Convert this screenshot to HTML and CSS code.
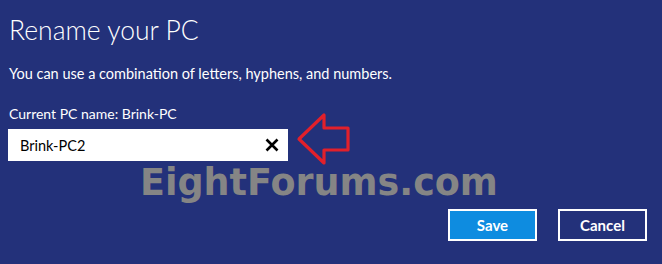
FILE: index.html
```html
<!DOCTYPE html>
<html lang="en">
<head>
    <meta charset="UTF-8">
    <meta name="viewport" content="width=device-width, initial-scale=1.0">
    <title>Rename your PC</title>
    <link rel="stylesheet" href="styles.css">
</head>
<body>
    <div class="panel">
        <h1>Rename your PC</h1>
        <p class="hint">You can use a combination of letters, hyphens, and numbers.</p>

        <label class="current">Current PC name: Brink-PC</label>
        <div class="name-box">
            <span class="value">Brink-PC2</span>
            <svg class="clear" width="14" height="14" viewBox="0 0 14 14">
                <path d="M1.5 1.5 L12.5 12.5 M12.5 1.5 L1.5 12.5" stroke="#000" stroke-width="2.6" fill="none"/>
            </svg>
        </div>

        <div class="actions">
            <button class="btn primary">Save</button>
            <button class="btn">Cancel</button>
        </div>

        <!-- annotation arrow and site watermark -->
        <svg class="arrow" width="60" height="56" viewBox="0 0 60 56">
            <path d="M3 27 L28 3 L28 16 L52 16 L52 38 L28 38 L28 51 Z" fill="none" stroke="#e2202b" stroke-width="3.2" stroke-linejoin="round"/>
        </svg>
        <div class="watermark">EightForums.com</div>
    </div>
</body>
</html>
```

FILE: styles.css
```css
html, body { margin: 0; padding: 0; }
body { background: #23317a; width: 662px; height: 264px; overflow: hidden; font-family: Lato, "Open Sans", sans-serif; color: #fff; }
.panel { position: relative; height: 264px; padding: 13px 15px 0 9px; box-sizing: border-box; }
h1 { margin: 0; font-size: 26.5px; line-height: 34px; font-weight: 300; }
.hint { margin: 17px 0 0; font-size: 14.5px; line-height: 20px; }
.current { display: block; margin-top: 20px; font-size: 14px; line-height: 20px; }
.name-box { margin: 5px 0 0 -1px; width: 280px; height: 32px; background: #fff; color: #000; display: flex; align-items: center; justify-content: space-between; padding: 0 9px 0 12px; box-sizing: border-box; font-size: 14.5px; }
.clear { display: block; }
.actions { display: flex; justify-content: flex-end; gap: 21px; margin-top: 48px; }
.btn { width: 89px; height: 32px; border: 2px solid #fff; background: transparent; color: #fff; font-family: inherit; font-size: 15px; font-weight: 700; padding: 0; }
.btn.primary { background: #0e8ce0; }
.arrow { position: absolute; left: 296px; top: 112px; }
.watermark { position: absolute; left: 140px; top: 161px; font-family: "DejaVu Sans", Verdana, sans-serif; font-weight: bold; font-size: 36.5px; color: #858585; }
```
